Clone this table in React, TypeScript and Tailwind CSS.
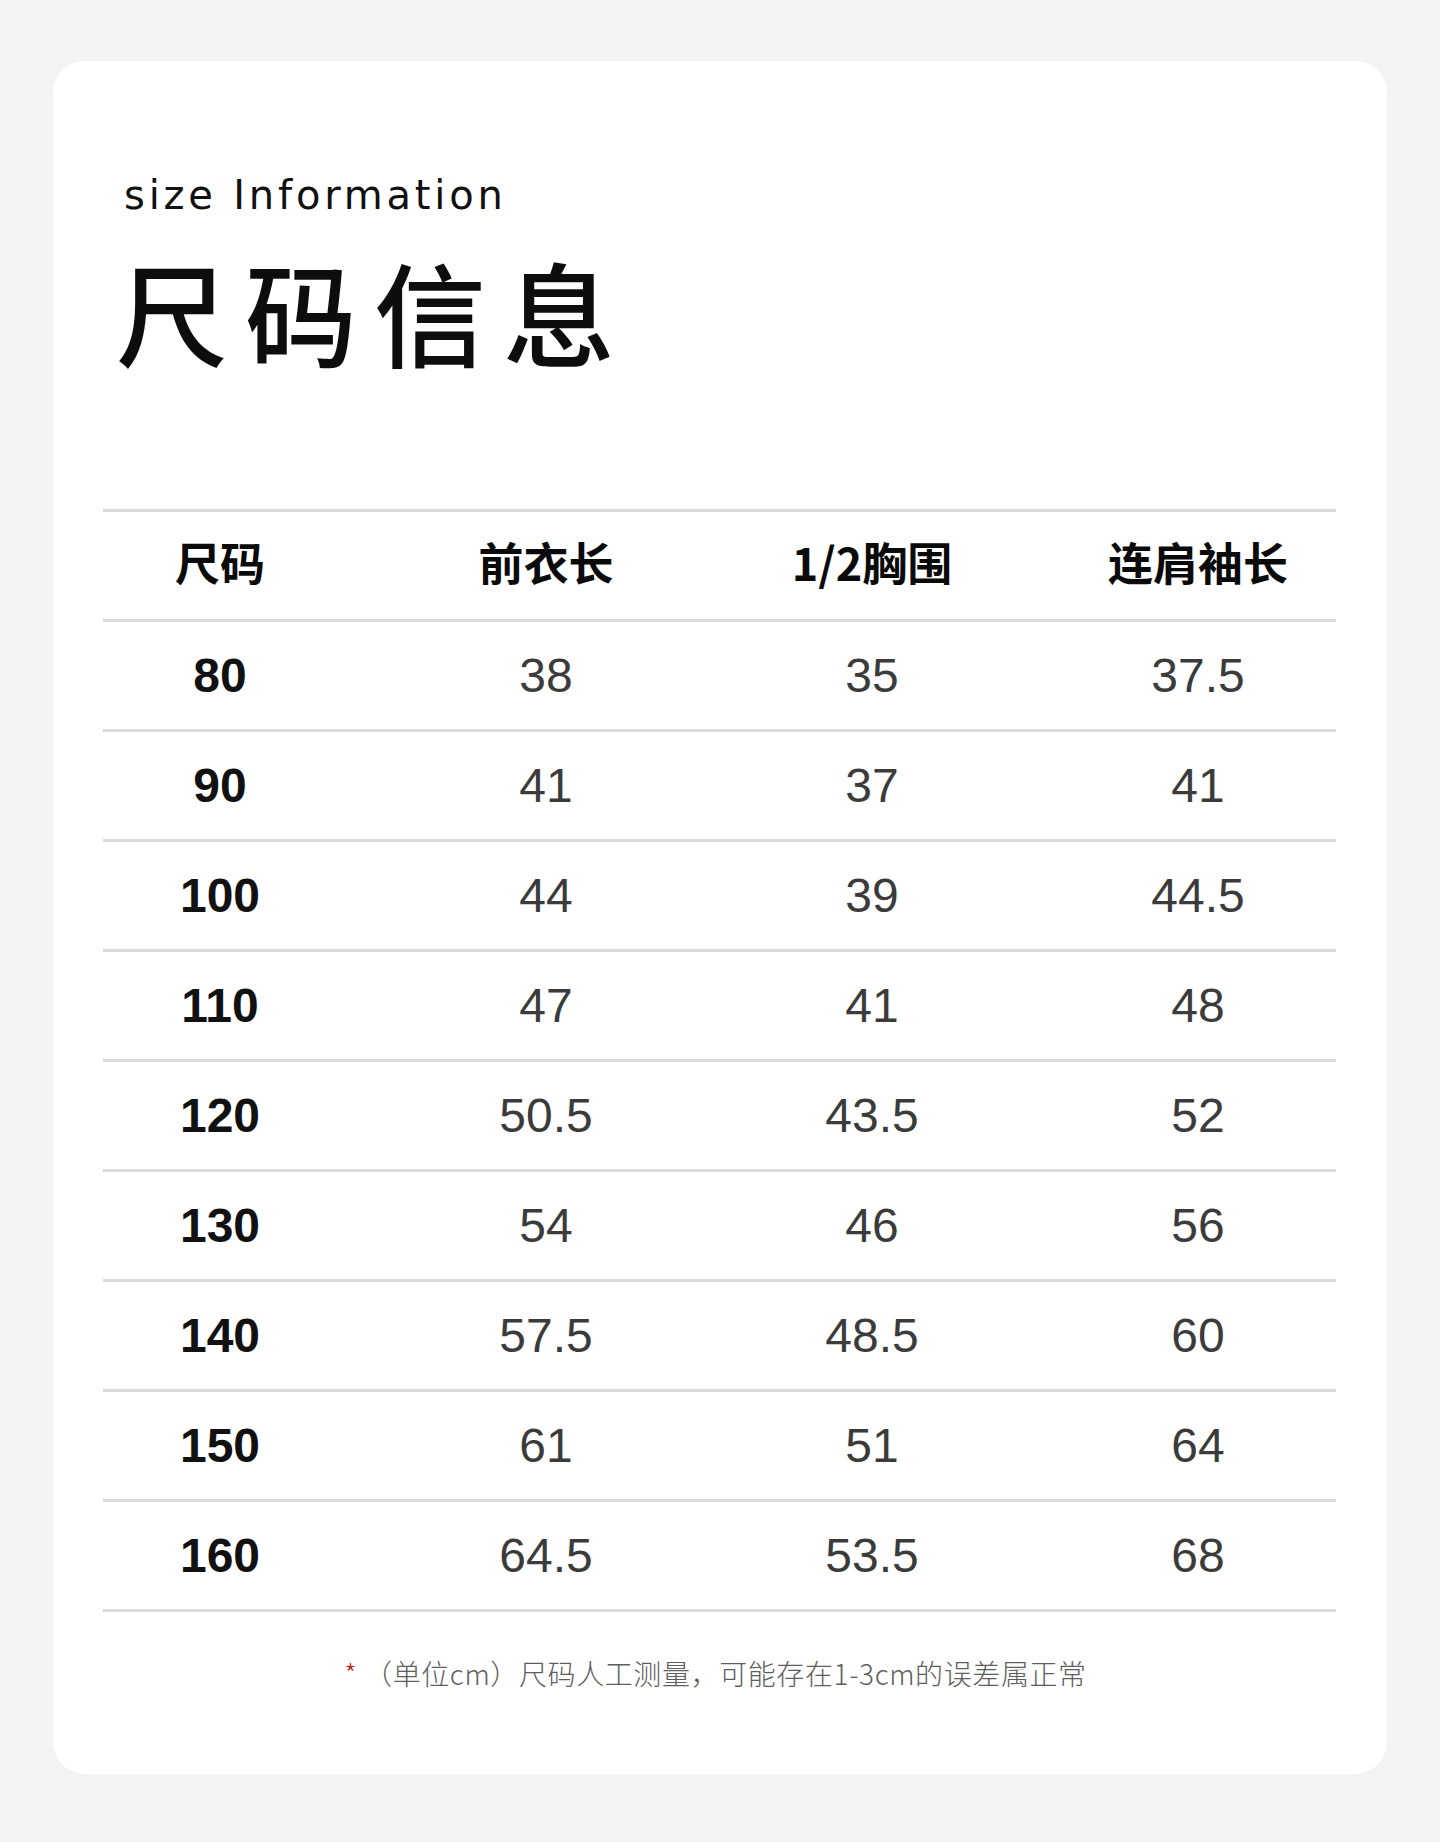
const HEADERS = ["尺码", "前衣长", "1/2胸围", "连肩袖长"];

const ROWS = [
  ["80", "38", "35", "37.5"],
  ["90", "41", "37", "41"],
  ["100", "44", "39", "44.5"],
  ["110", "47", "41", "48"],
  ["120", "50.5", "43.5", "52"],
  ["130", "54", "46", "56"],
  ["140", "57.5", "48.5", "60"],
  ["150", "61", "51", "64"],
  ["160", "64.5", "53.5", "68"],
];

const cjk = "font-['Noto_Sans_CJK_SC',sans-serif]";
const num = "font-['Liberation_Sans','Noto_Sans_CJK_SC',sans-serif]";

export default function App() {
  return (
    <div className="min-h-[1842px] bg-[#f3f3f5] pt-[61px] pl-[53px]">
      <div className="w-[1334px] h-[1713px] bg-white rounded-[32px] pl-[50px] pr-[51px] pt-[114px]">
        {/* Heading */}
        <p className="font-['DejaVu_Sans',sans-serif] text-[40px] leading-[40px] tracking-[3.8px] text-[#111] pl-[21px]">
          size Information
        </p>
        <h1 className={`${cjk} text-[112px] leading-[112px] tracking-[17px] font-medium text-[#0d0d0d] mt-[39px] pl-[13px]`}>
          尺码信息
        </h1>

        {/* Size table */}
        <div className="mt-[143px] border-b-[3px] border-[#dadada]">
          <div className="h-[110px] border-t-[3px] border-[#dadada] flex items-center pb-[8px]">
            <div className="-ml-[46px] w-[1304px] shrink-0 grid grid-cols-4 text-center">
              {HEADERS.map((h) => (
                <span key={h} className={`${cjk} text-[45px] font-bold text-[#0a0a0a] leading-none`}>
                  {h}
                </span>
              ))}
            </div>
          </div>
          {ROWS.map((row) => (
            <div key={row[0]} className="h-[110px] border-t-[3px] border-[#dadada] flex items-center">
              <div className="-ml-[46px] w-[1304px] shrink-0 grid grid-cols-4 text-center">
                {row.map((v, i) => (
                  <span
                    key={i}
                    className={`${num} text-[48px] leading-none ${
                      i === 0 ? "font-bold text-[#111]" : "text-[#3b3b3b]"
                    }`}
                  >
                    {v}
                  </span>
                ))}
              </div>
            </div>
          ))}
        </div>

        {/* Footnote */}
        <p className={`${cjk} mt-[41px] text-center text-[28px] leading-[40px] tracking-[0.6px] font-light text-[#5e5e5e] pr-[8px]`}>
          <span className="text-[#c0201a]">*</span> （单位cm）尺码人工测量，可能存在1-3cm的误差属正常
        </p>
      </div>
    </div>
  );
}
